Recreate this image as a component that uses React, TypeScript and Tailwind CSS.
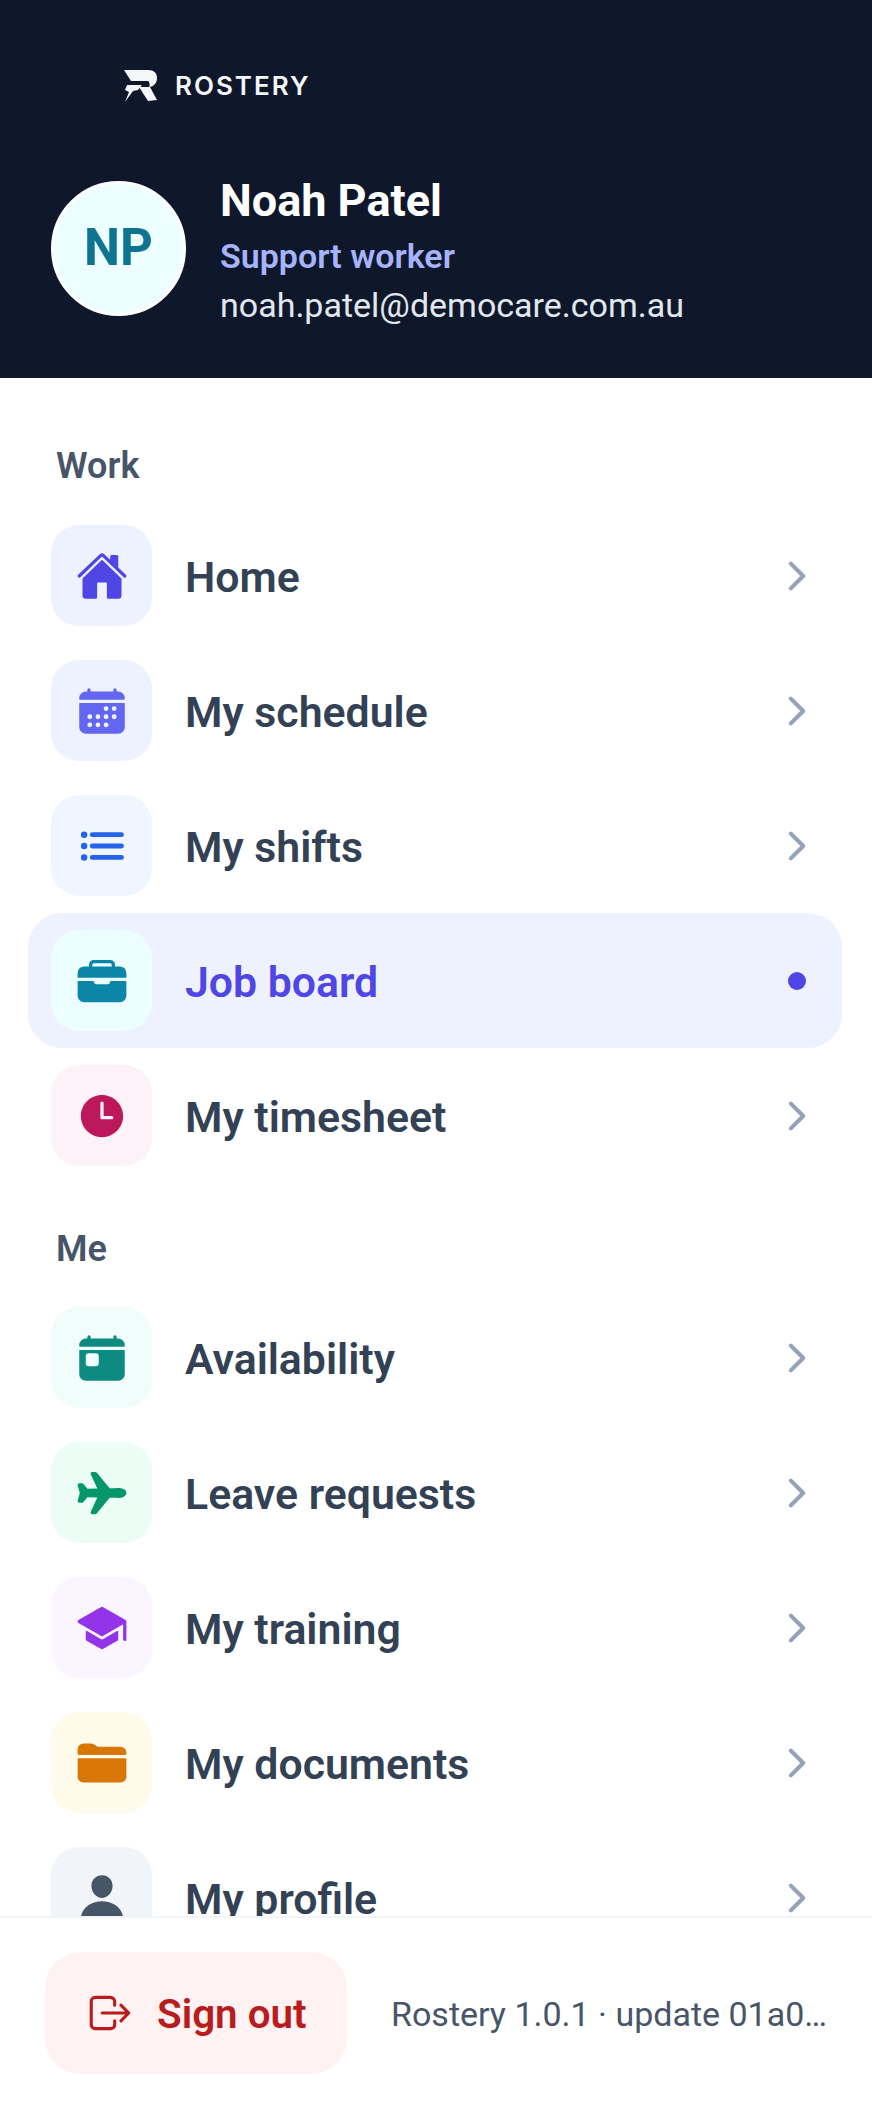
import {
  IoHome, IoCalendar, IoList, IoBriefcase, IoTime, IoToday, IoAirplane, IoSchool, IoFolder, IoPerson,
  IoChevronForward, IoLogOutOutline,
} from "react-icons/io5";
import type { IconType } from "react-icons";

type Item = { label: string; Icon: IconType; tile: string; ink: string; active?: boolean };

const work: Item[] = [
  { label: "Home", Icon: IoHome, tile: "bg-[#eef2ff]", ink: "text-[#4f46e5]" },
  { label: "My schedule", Icon: IoCalendar, tile: "bg-[#eef2ff]", ink: "text-[#6366f1]" },
  { label: "My shifts", Icon: IoList, tile: "bg-[#eff6ff]", ink: "text-[#2563eb]" },
  { label: "Job board", Icon: IoBriefcase, tile: "bg-[#ecfeff]", ink: "text-[#0c86a8]", active: true },
  { label: "My timesheet", Icon: IoTime, tile: "bg-[#fdf2f8]", ink: "text-[#be185d]" },
];

const me: Item[] = [
  { label: "Availability", Icon: IoToday, tile: "bg-[#f0fdfa]", ink: "text-[#0e8b80]" },
  { label: "Leave requests", Icon: IoAirplane, tile: "bg-[#ecfdf5]", ink: "text-[#059669]" },
  { label: "My training", Icon: IoSchool, tile: "bg-[#faf5ff]", ink: "text-[#9333ea]" },
  { label: "My documents", Icon: IoFolder, tile: "bg-[#fffbeb]", ink: "text-[#d97706]" },
  { label: "My profile", Icon: IoPerson, tile: "bg-[#f1f5f9]", ink: "text-[#475569]" },
];

function NavRow({ label, Icon, tile, ink, active }: Item) {
  return (
    <div
      className={`ml-[28px] mr-[30px] flex h-[135px] shrink-0 items-center rounded-[34px] pl-[23px] pr-[23px] ${
        active ? "bg-[#eef2ff]" : ""
      }`}
    >
      <div className={`flex h-[101px] w-[101px] shrink-0 items-center justify-center rounded-[28px] ${tile}`}>
        <Icon className={`h-[52px] w-[52px] ${ink}`} />
      </div>
      <span
        className={`ml-[33px] flex-1 pt-[3px] text-[42.8px] leading-[56px] font-semibold ${
          active ? "text-[#4f46e5]" : "text-[#334155]"
        }`}
      >
        {label}
      </span>
      {active ? (
        <span className="mr-[13px] h-[18px] w-[18px] rounded-full bg-[#4f46e5]" />
      ) : (
        <IoChevronForward className="h-[44px] w-[44px] text-[#94a3b8]" />
      )}
    </div>
  );
}

function SectionLabel({ children, className }: { children: string; className: string }) {
  return <div className={`pl-[56px] text-[36px] leading-[44px] font-semibold text-[#475569] ${className}`}>{children}</div>;
}

export default function App() {
  return (
    <div className="flex h-[2108px] w-[872px] flex-col overflow-hidden bg-white font-['Roboto',sans-serif]">
      <header className="h-[378px] shrink-0 bg-[#0f172a] pt-[68px] pl-[51px]">
        <div className="flex h-[35px] items-center pl-[73px]">
          <svg viewBox="0 0 34 32" className="h-[32px] w-[34px] fill-[#f4f6f8]">
            <path d="M0 0H24C30 0 33 3 33 8C33 13 30 16 26 17L33 30L24 31L15 17H25C26 17 26 12 24 11H7Z" />
            <path d="M3 15H18L14 20L9 21L1 32L5 22L1 20Z" />
          </svg>
          <span className="ml-[17px] text-[26px] leading-[30px] font-semibold tracking-[2px] text-[#f4f6f8] font-['Inter',sans-serif]">
            ROSTERY
          </span>
        </div>
        <div className="mt-[70px] flex items-start">
          <div className="mt-[8px] flex h-[135px] w-[135px] shrink-0 items-center justify-center rounded-full border-[3px] border-white bg-[#ecfeff] text-[51px] font-bold text-[#0e7490]">
            NP
          </div>
          <div className="ml-[34px]">
            <div className="text-[45px] leading-[56px] font-bold text-white">Noah Patel</div>
            <div className="mt-[5px] text-[34px] leading-[44px] font-semibold text-[#a5b4fc]">Support worker</div>
            <div className="mt-[5px] text-[34px] leading-[44px] text-[#e2e8f0]">noah.patel@democare.com.au</div>
          </div>
        </div>
      </header>

      <nav className="flex min-h-0 flex-1 flex-col overflow-hidden pt-[66px]">
        <SectionLabel className="mb-[20px]">Work</SectionLabel>
        {work.map((item) => (
          <NavRow key={item.label} {...item} />
        ))}
        <SectionLabel className="mt-[44px] mb-[19px]">Me</SectionLabel>
        {me.map((item) => (
          <NavRow key={item.label} {...item} />
        ))}
      </nav>

      <footer className="flex h-[192px] shrink-0 items-start border-t-2 border-[#f1f5f9] pt-[34px] pl-[45px]">
        <div className="flex h-[122px] w-[302px] shrink-0 items-center rounded-[36px] bg-[#fef2f2] pl-[40px]">
          <IoLogOutOutline className="h-[50px] w-[50px] text-[#b91c1c]" />
          <span className="ml-[22px] pt-[5px] text-[40.4px] font-semibold text-[#b91c1c]">Sign out</span>
        </div>
        <div className="ml-[44px] h-[122px] w-[440px] truncate pt-[1px] text-[34px] leading-[122px] text-[#475569]">
          Rostery 1.0.1 · update 01a0…
        </div>
      </footer>
    </div>
  );
}
